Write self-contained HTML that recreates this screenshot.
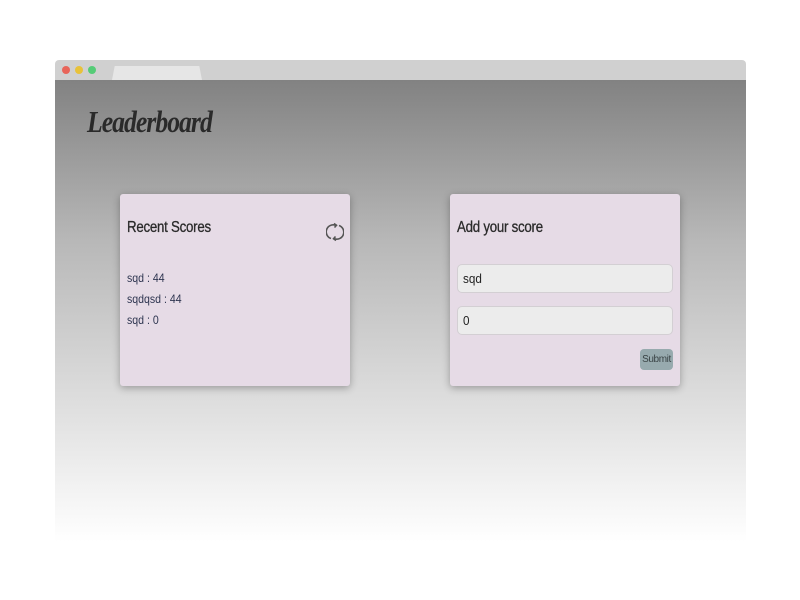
<!DOCTYPE html>
<html><head><style>
*{margin:0;padding:0;box-sizing:border-box}
body{width:800px;height:600px;background:#fff;position:relative;font-family:"Liberation Sans",sans-serif;overflow:hidden}
.bar{position:absolute;left:55px;top:60px;width:691px;height:20px;background:#d0d0d0;border-radius:4px 4px 0 0}
.dot{position:absolute;top:6px;width:8px;height:8px;border-radius:50%}
.tab{position:absolute;top:6px;width:90px;height:14px;background:#e6e6e6;clip-path:polygon(3% 0,97% 0,100% 100%,0 100%);border-radius:3px 3px 0 0}
.page{position:absolute;left:55px;top:80px;width:691px;height:462px;background:linear-gradient(#828282,#b8b8b8 35%,#dedede 70%,#fff)}
h1{position:absolute;left:87px;top:104px;font-family:"Liberation Serif",serif;font-style:italic;font-weight:bold;font-size:31px;color:#2a2a2a;letter-spacing:-1.2px;transform:scaleX(0.83);transform-origin:left}
.card{position:absolute;top:194px;width:230px;height:192px;background:#e6dbe6;border-radius:3px;box-shadow:0 2px 8px rgba(0,0,0,.3)}
.card h2{position:absolute;left:7px;top:25px;font-size:16px;font-weight:normal;color:#2a2a2a;letter-spacing:-.3px;transform:scaleX(.83);transform-origin:left;-webkit-text-stroke:.3px #2a2a2a}
.li{position:absolute;left:7px;font-size:12px;color:#2e3550;transform:scaleX(.88);transform-origin:left}
.in{position:absolute;left:7px;width:216px;height:29px;background:#ececec;border:1px solid #d3cfd3;border-radius:5px;font-size:13px;color:#222;padding:6px 5px}
.in span{display:inline-block;transform:scaleX(.9);transform-origin:left}
.btn{position:absolute;left:190px;top:155px;width:33px;height:21px;background:#97aaae;border-radius:4px;font-size:10px;color:#3a4446;text-align:center;line-height:21px;letter-spacing:-.4px}
</style></head><body>
<div class="bar"><div class="dot" style="left:7px;background:#e8655a"></div><div class="dot" style="left:20px;background:#e8c23a"></div><div class="dot" style="left:33px;background:#55cc77"></div><div class="tab" style="left:57px"></div></div>
<div class="page"></div>
<h1>Leaderboard</h1>
<div class="card" style="left:120px">
<h2>Recent Scores</h2>
<svg style="position:absolute;left:206px;top:28px" width="18" height="20" viewBox="0 0 18 20" fill="none" stroke="#555" stroke-width="1.6"><path d="M5 16.5A7 7 0 0 1 9.5 3.2"/><path d="M8 1.5l2.5 1.8L8.5 5.5"/><path d="M13 3.5A7 7 0 0 1 8.5 16.8"/><path d="M10 18.5l-2.5-1.8L9.5 14.5"/></svg>
<div class="li" style="top:77px">sqd : 44</div>
<div class="li" style="top:98px">sqdqsd : 44</div>
<div class="li" style="top:119px">sqd : 0</div>
</div>
<div class="card" style="left:450px">
<h2>Add your score</h2>
<div class="in" style="top:70px"><span>sqd</span></div>
<div class="in" style="top:112px"><span>0</span></div>
<div class="btn">Submit</div>
</div>
</body></html>
